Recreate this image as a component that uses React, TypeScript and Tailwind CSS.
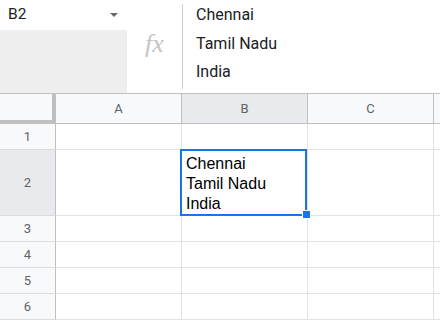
import React from "react";

const hdr = "bg-[#f8f9fa] border-r border-b border-[#c0c0c0] flex items-center justify-center text-[13px] text-[#5f6368]";
const hdrSel = "bg-[#e8eaed] border-r border-b border-[#c0c0c0] flex items-center justify-center text-[13px] text-[#5f6368]";
const rowHdr = "bg-[#f8f9fa] border-r border-r-[#c0c0c0] border-b border-b-[#dadce0] flex items-center justify-center text-[13px] text-[#5f6368]";
const rowHdrSel = "bg-[#e8eaed] border-r border-r-[#c0c0c0] border-b border-b-[#dadce0] flex items-center justify-center text-[13px] text-[#5f6368]";
const cell = "bg-white border-r border-b border-[#e2e2e3]";

export default function App() {
  const rows = [1, 2, 3, 4, 5, 6];
  return (
    <div className="w-[440px] h-[320px] overflow-hidden bg-white" style={{ fontFamily: "Roboto, 'Liberation Sans', sans-serif" }}>
      {/* top bar */}
      <div className="flex h-[94px] border-b border-[#c0c0c0]">
        <div className="w-[127px] flex flex-col">
          <div className="h-[30px] bg-white flex items-center justify-between pl-[8px] pr-[9px]">
            <span className="text-[15.5px] text-[#202124] leading-none">B2</span>
            <svg width="8" height="4" viewBox="0 0 8 4"><path d="M0 0H8L4 4Z" fill="#666" /></svg>
          </div>
          <div className="flex-1 bg-[#eeeeee]" />
        </div>
        <div className="w-[55px] flex items-center justify-center pb-[5px]">
          <span className="text-[26px] italic text-[#c4c4c4] leading-none" style={{ fontFamily: "'Liberation Serif', serif" }}>fx</span>
        </div>
        <div className="flex-1 flex flex-col">
          <div className="flex-1 border-l border-[#d0d0d0] my-[4px] pl-[13px] pt-[1px] flex flex-col text-[16px] text-[#202124] leading-[28.7px]">
            <span className="-mt-[4px]">Chennai</span>
            <span>Tamil Nadu</span>
            <span>India</span>
          </div>
        </div>
      </div>
      {/* grid */}
      <div className="grid grid-cols-[56px_126px_126px_126px_1fr] grid-rows-[30px_26px_66px_26px_26px_26px_26px]">
        <div className="bg-[#f8f9fa] border-r-[4px] border-b-[4px] border-[#c0c0c0]" />
        <div className={hdr}>A</div>
        <div className={hdrSel}>B</div>
        <div className={hdr}>C</div>
        <div className="bg-[#f8f9fa] border-b border-[#c0c0c0]" />
        {rows.map((r) => (
          <React.Fragment key={r}>
            <div className={r === 2 ? rowHdrSel : rowHdr}>{r}</div>
            <div className={cell} />
            {r === 2 ? (
              <div className={cell + " relative"}>
                <div className="pl-[4px] pt-[4px] text-[16px] leading-[20px] text-[#000]" style={{ fontFamily: "'Liberation Sans', Arial, sans-serif" }}>
                  <div>Chennai</div>
                  <div>Tamil Nadu</div>
                  <div>India</div>
                </div>
                <div className="absolute left-[-2px] top-[-1px] w-[127px] h-[67px] border-2 border-[#1a73e8]" />
                <div className="absolute left-[120px] top-[60px] w-[7px] h-[7px] bg-[#1a73e8] border border-white box-content" />
              </div>
            ) : (
              <div className={cell} />
            )}
            <div className={cell} />
            <div className="bg-white border-b border-[#e2e2e3]" />
          </React.Fragment>
        ))}
      </div>
    </div>
  );
}
